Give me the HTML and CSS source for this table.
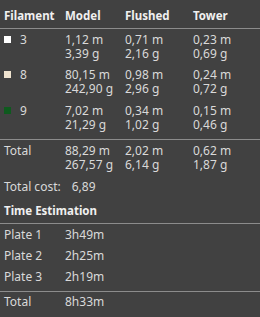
FILE: index.html
```
<!DOCTYPE html>
<html>
<head><meta charset="utf-8"><link rel="stylesheet" href="styles.css"></head>
<body>
<div class="panel">
  <div class="grid head">
    <div>Filament</div><div>Model</div><div>Flushed</div><div>Tower</div>
  </div>
  <div class="rule"></div>
  <div class="grid row first">
    <div class="fil"><span class="sw white"></span>3</div>
    <div>1,12 m<br>3,39 g</div><div>0,71 m<br>2,16 g</div><div>0,23 m<br>0,69 g</div>
  </div>
  <div class="grid row">
    <div class="fil"><span class="sw cream"></span>8</div>
    <div>80,15 m<br>242,90 g</div><div>0,98 m<br>2,96 g</div><div>0,24 m<br>0,72 g</div>
  </div>
  <div class="grid row">
    <div class="fil"><span class="sw green"></span>9</div>
    <div>7,02 m<br>21,29 g</div><div>0,34 m<br>1,02 g</div><div>0,15 m<br>0,46 g</div>
  </div>
  <div class="rule r2"></div>
  <div class="grid row total">
    <div>Total</div>
    <div>88,29 m<br>267,57 g</div><div>2,02 m<br>6,14 g</div><div>0,62 m<br>1,87 g</div>
  </div>
  <div class="cost"><span>Total cost:</span><span class="costv">6,89</span></div>
  <div class="section">Time Estimation</div>
  <div class="rule r3"></div>
  <div class="plates">
    <div class="prow"><span>Plate 1</span><span>3h49m</span></div>
    <div class="prow"><span>Plate 2</span><span>2h25m</span></div>
    <div class="prow"><span>Plate 3</span><span>2h19m</span></div>
  </div>
  <div class="rule"></div>
  <div class="prow last"><span>Total</span><span>8h33m</span></div>
</div>
</body>
</html>
```
FILE: styles.css
```
html, body { margin: 0; padding: 0; background: #414141; }
body { width: 260px; height: 317px; overflow: hidden; }
.panel {
  font-family: "Noto Sans", sans-serif;
  font-size: 12px;
  color: #d9d9d9;
  padding-top: 9px;
}
.grid {
  display: grid;
  grid-template-columns: 61px 60px 68px 1fr;
  padding-left: 4px;
}
.head { font-weight: 700; font-size: 11.5px; color: #f0f0f0; line-height: 14px; height: 14px; margin-bottom: 5px; }
.rule { height: 1px; background: #8c8c8c; }
.row { line-height: 14px; padding-top: 4px; height: 32px; }
.row.first { height: 31px; }
.r2 { margin-top: 3px; }
.row.total { padding-top: 4px; height: 28px; }
.fil { display: flex; align-items: flex-start; }
.sw { width: 7px; height: 7px; margin-top: 3px; margin-right: 9px; display: inline-block; }
.white { background: #ffffff; }
.cream { background: #efe3cf; }
.green { background: #0e5a1e; }
.cost { padding-left: 4px; line-height: 14px; margin-top: 8px; display: flex; }
.costv { margin-left: 11px; }
.section { font-weight: 700; font-size: 11.5px; color: #f0f0f0; padding-left: 4px; line-height: 14px; margin-top: 10px; }
.r3 { margin-top: 5px; }
.plates { padding-bottom: 3px; }
.prow { display: grid; grid-template-columns: 61px 1fr; padding-left: 4px; line-height: 21px; }
.plates .prow:last-child { line-height: 22px; }
.last { line-height: 20px; }
```
